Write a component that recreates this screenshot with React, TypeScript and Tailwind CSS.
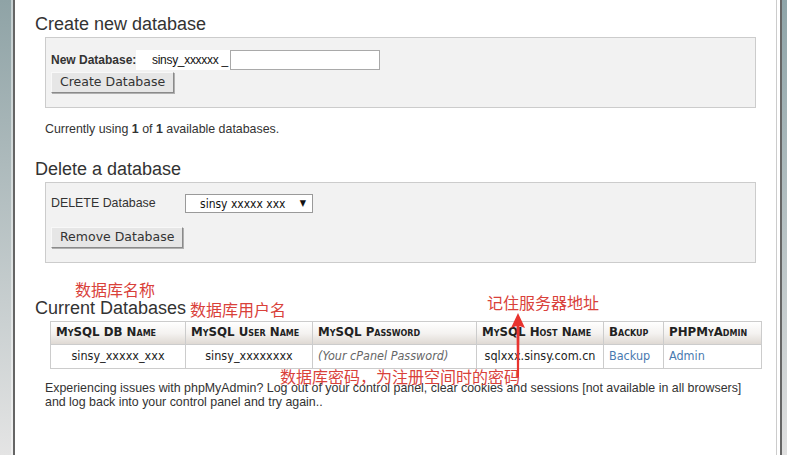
const arial = "font-['Liberation_Sans',Arial,sans-serif]";
const verdana = "font-['DejaVu_Sans',Verdana,sans-serif]";
const tahoma = "font-['DejaVu_Sans_Condensed','DejaVu_Sans',Tahoma,sans-serif]";
const cjk = "font-['Noto_Sans_CJK_SC',sans-serif]";

const columns = [
  { label: "MySQL DB Name", width: "w-[135px]" },
  { label: "MySQL User Name", width: "w-[127px]" },
  { label: "MySQL Password", width: "w-[164px]" },
  { label: "MySQL Host Name", width: "w-[127px]" },
  { label: "Backup", width: "w-[60px]" },
  { label: "PHPMyAdmin", width: "w-[98px]" },
];

function Button({ children }: { children: string }) {
  return (
    <button
      className={`${verdana} h-[21px] px-[8px] text-[12.5px] leading-none text-[#333] bg-[#e6e6e6] border border-t-[#f8f8f8] border-l-[#f8f8f8] border-r-[#8a8a8a] border-b-[#8a8a8a] shadow-[1px_1px_0_#b0b0b0]`}
    >
      {children}
    </button>
  );
}

function Note({ text, className }: { text: string; className: string }) {
  return (
    <span className={`${cjk} absolute text-[16px] leading-none text-[#d9413a] whitespace-nowrap ${className}`}>
      {text}
    </span>
  );
}

export default function App() {
  return (
    <div className={`${arial} relative flex w-[787px] h-[455px] overflow-hidden bg-white text-[#333]`}>
      {/* left gutter */}
      <div className="w-[11px] bg-gradient-to-b from-[#8fa3a6] to-[#e4e4e4]" />
      <div className="w-[2px] bg-gradient-to-b from-[#c5cfd0] to-[#f0f0f0]" />
      <div className="w-[2px] bg-[#656565]" />

      <main className="w-[761px] px-[20px] pt-[13px]">
        <h2 className="text-[18px] leading-[22px]">Create new database</h2>
        <div className="mt-[2px] ml-[10px] border border-[#cccccc] bg-[#f2f2f2] pl-[5px] pt-[11px] pb-[15px]">
          <div className="flex items-center h-[21px]">
            <span className="w-[85px] flex-none whitespace-nowrap text-[12px] font-bold">New Database:</span>
            <span className="h-[20px] w-[94px] flex-none bg-white pl-[16px] text-[12px] leading-[20px] text-[#111] tracking-[-0.3px] whitespace-nowrap">
              sinsy_xxxxxx _
            </span>
            <div className="h-[20px] w-[150px] flex-none border border-[#a9a9a9] bg-white" />
          </div>
          <div className="mt-[2px] h-[20px] flex">
            <Button>Create Database</Button>
          </div>
        </div>
        <p className="mt-[14px] ml-[10px] text-[12.4px] leading-[14px]">
          Currently using <b>1</b> of <b>1</b> available databases.
        </p>

        <h2 className="mt-[22px] text-[18px] leading-[22px]">Delete a database</h2>
        <div className="mt-[2px] ml-[10px] border border-[#cccccc] bg-[#f2f2f2] pl-[5px] pt-[11px] pb-[14px]">
          <div className="flex items-center h-[19px]">
            <span className="w-[134px] flex-none whitespace-nowrap text-[12.4px]">DELETE Database</span>
            <div className={`${tahoma} flex items-center h-[19px] w-[128px] border border-[#9a9a9a] bg-white pl-[14px] pr-[6px] text-[12px] text-[#111]`}>
              <span className="flex-1">sinsy xxxxx xxx</span>
              <span className="text-[9px]">▼</span>
            </div>
          </div>
          <div className="mt-[14px] h-[21px] flex">
            <Button>Remove Database</Button>
          </div>
        </div>

        <h2 className="mt-[34px] text-[18px] leading-[22px]">Current Databases</h2>
        <table className={`${verdana} mt-[2px] ml-[15px] w-[711px] border-collapse table-fixed`}>
          <thead>
            <tr className="h-[23px] bg-gradient-to-b from-white via-[#f4f2f0] to-[#ddd7d1]">
              {columns.map((c) => (
                <th
                  key={c.label}
                  className={`${c.width} border border-[#cccccc] px-[5px] text-left text-[11.8px] font-bold text-[#222] [font-variant:small-caps] whitespace-nowrap`}
                >
                  {c.label}
                </th>
              ))}
            </tr>
          </thead>
          <tbody>
            <tr className={`${tahoma} h-[24px] text-[12.5px]`}>
              <td className="border border-[#cccccc] text-center text-[#222]">sinsy_xxxxx_xxx</td>
              <td className="border border-[#cccccc] text-center text-[#222]">sinsy_xxxxxxxx</td>
              <td className="border border-[#cccccc] px-[5px] italic text-[#666]">(Your cPanel Password)</td>
              <td className="border border-[#cccccc] text-center text-[#222]">sqlxxx.sinsy.com.cn</td>
              <td className="border border-[#cccccc] px-[5px] text-[#4a7ab0]">Backup</td>
              <td className="border border-[#cccccc] px-[5px] text-[#4a7ab0]">Admin</td>
            </tr>
          </tbody>
        </table>
        <p className="mt-[12px] ml-[10px] text-[12.4px] leading-[14px] whitespace-nowrap">
          Experiencing issues with phpMyAdmin? Log out of your control panel, clear cookies and sessions [not available in all browsers]
          <br />
          and log back into your control panel and try again..
        </p>
      </main>

      {/* right gutter */}
      <div className="w-[1px] bg-[#cccccc]" />
      <div className="w-[3px] bg-white" />
      <div className="w-[2px] bg-[#666]" />
      <div className="w-[5px] bg-gradient-to-b from-[#8ea4a8] to-[#e0e0e0]" />

      {/* annotations */}
      <Note text="数据库名称" className="left-[75px] top-[281px]" />
      <Note text="数据库用户名" className="left-[190px] top-[301px]" />
      <Note text="记住服务器地址" className="left-[487px] top-[294px]" />
      <Note text="数据库密码，为注册空间时的密码" className="left-[280px] top-[368px]" />
      <svg className="absolute left-[509px] top-[312px]" width="18" height="66" viewBox="0 0 18 66">
        <path d="M9 1 L16 16 L10.5 14 L10 65 L8 65 L7.5 14 L2 16 Z" fill="#e8332e" />
      </svg>
    </div>
  );
}
